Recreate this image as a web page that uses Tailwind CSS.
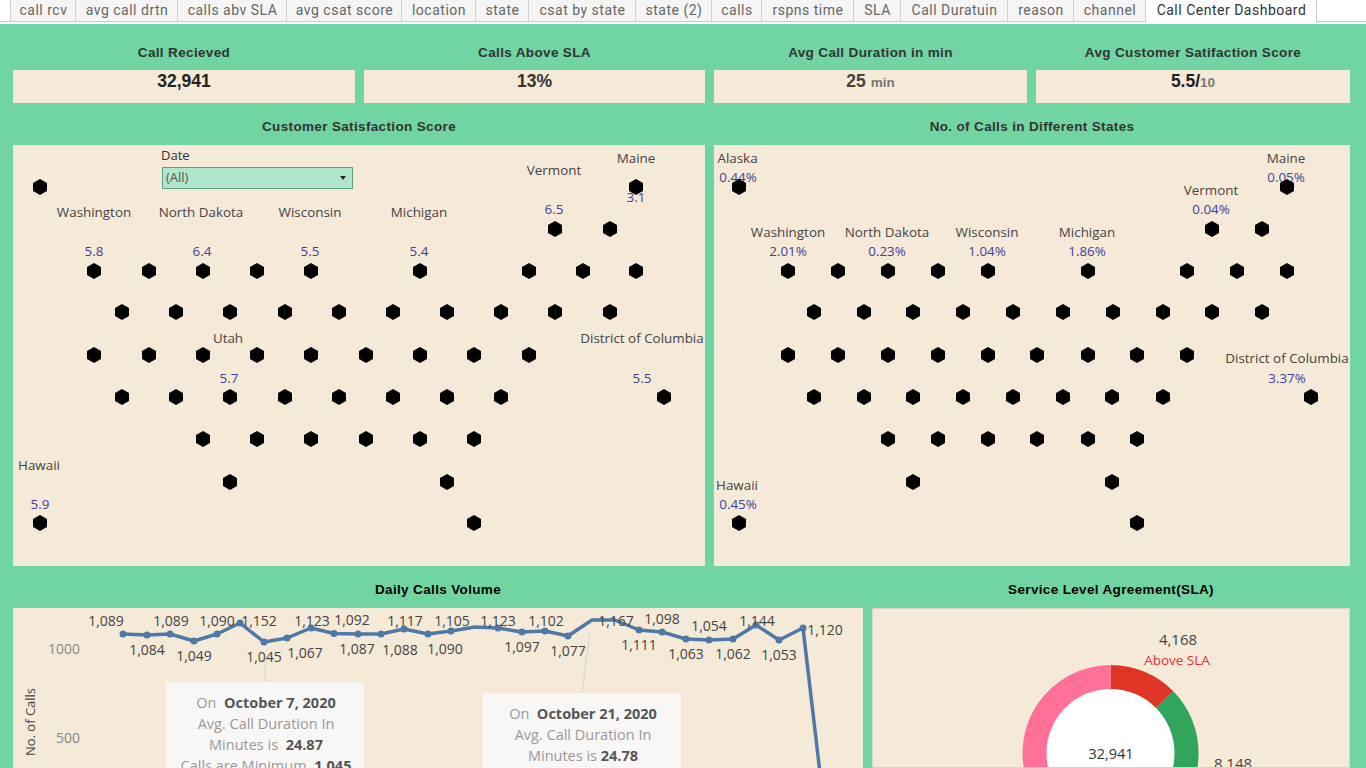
<!DOCTYPE html>
<html>
<head>
<meta charset="utf-8">
<script src="https://cdn.jsdelivr.net/npm/@tailwindcss/browser@4"></script>
</head>
<body class="w-[1366px] h-[768px] overflow-hidden bg-white font-['Open_Sans',sans-serif]">
<nav class="flex h-[22px] pl-[10px] border-b border-[#c8c8c8] text-[14px] leading-[21px] text-[#666] font-['Roboto',sans-serif] tracking-[0.5px]">
  <div class="w-[66px] pl-[1px] text-center bg-[#f5f5f5] border-l border-r border-[#d0d0d0]">call rcv</div>
  <div class="w-[102px] pl-[1px] text-center bg-[#f5f5f5] border-r border-[#d0d0d0]">avg call drtn</div>
  <div class="w-[109px] pl-[1px] text-center bg-[#f5f5f5] border-r border-[#d0d0d0]">calls abv SLA</div>
  <div class="w-[115px] pl-[1px] text-center bg-[#f5f5f5] border-r border-[#d0d0d0]">avg csat score</div>
  <div class="w-[74px] pl-[1px] text-center bg-[#f5f5f5] border-r border-[#d0d0d0]">location</div>
  <div class="w-[53px] pl-[1px] text-center bg-[#f5f5f5] border-r border-[#d0d0d0]">state</div>
  <div class="w-[107px] pl-[1px] text-center bg-[#f5f5f5] border-r border-[#d0d0d0]">csat by state</div>
  <div class="w-[76px] pl-[1px] text-center bg-[#f5f5f5] border-r border-[#d0d0d0]">state (2)</div>
  <div class="w-[50px] pl-[1px] text-center bg-[#f5f5f5] border-r border-[#d0d0d0]">calls</div>
  <div class="w-[92px] pl-[1px] text-center bg-[#f5f5f5] border-r border-[#d0d0d0]">rspns time</div>
  <div class="w-[47px] pl-[1px] text-center bg-[#f5f5f5] border-r border-[#d0d0d0]">SLA</div>
  <div class="w-[107px] pl-[1px] text-center bg-[#f5f5f5] border-r border-[#d0d0d0]">Call Duratuin</div>
  <div class="w-[66px] pl-[1px] text-center bg-[#f5f5f5] border-r border-[#d0d0d0]">reason</div>
  <div class="w-[72px] pl-[1px] text-center bg-[#f5f5f5] border-r border-[#d0d0d0]">channel</div>
  <div class="w-[171px] h-[22px] pl-[1px] text-center bg-white border-r border-[#c8c8c8] text-[#333]">Call Center Dashboard</div>
</nav>
<main class="mt-[2px] h-[744px] overflow-hidden bg-[#70d5a2] pl-[13px] font-['Liberation_Sans',sans-serif]">
  <section class="flex gap-[9px]">
    <div class="w-[342px]">
      <h2 class="pt-[20px] h-[46px] text-center text-[13.5px] leading-[18px] font-bold tracking-[0.35px] text-[#333]">Call Recieved</h2>
      <div class="h-[33px] bg-[#f5e9d8] text-center text-[17.5px] leading-[22px] font-bold text-[#222]">32,941</div>
    </div>
    <div class="w-[341px]">
      <h2 class="pt-[20px] h-[46px] text-center text-[13.5px] leading-[18px] font-bold tracking-[0.35px] text-[#333]">Calls Above SLA</h2>
      <div class="h-[33px] bg-[#f5e9d8] text-center text-[17.5px] leading-[22px] font-bold text-[#333]">13%</div>
    </div>
    <div class="w-[313px]">
      <h2 class="pt-[20px] h-[46px] text-center text-[13.5px] leading-[18px] font-bold tracking-[0.35px] text-[#333]">Avg Call Duration in min</h2>
      <div class="h-[33px] bg-[#f5e9d8] text-center text-[17.5px] leading-[22px] font-bold text-[#444]">25 <span class="text-[13.5px] text-[#777]">min</span></div>
    </div>
    <div class="w-[314px]">
      <h2 class="pt-[20px] h-[46px] text-center text-[13.5px] leading-[18px] font-bold tracking-[0.35px] text-[#333]">Avg Customer Satifaction Score</h2>
      <div class="h-[33px] bg-[#f5e9d8] text-center text-[17.5px] leading-[22px] font-bold text-[#222]">5.5/<span class="text-[13.5px] text-[#777]">10</span></div>
    </div>
  </section>

  <section class="flex gap-[9px]">
    <div class="w-[692px]">
      <h2 class="pt-[15px] h-[42px] text-center text-[13.5px] leading-[18px] font-bold tracking-[0.35px] text-[#333]">Customer Satisfaction Score</h2>
      <div class="relative h-[421px] bg-[#f5e9d8]">
        <svg class="block font-['Open_Sans',sans-serif] text-[13.4px]" width="692" height="421" viewBox="13 145 692 421">
          <defs><polygon id="hex" points="0,-8 7,-4 7,4 0,8 -7,4 -7,-4" fill="#000"/></defs>
          <g text-anchor="middle" class="fill-[#444]">
            <text x="554" y="175">Vermont</text><text x="636" y="163">Maine</text>
            <text x="94" y="217">Washington</text><text x="201" y="217">North Dakota</text>
            <text x="310" y="217">Wisconsin</text><text x="419" y="217">Michigan</text>
            <text x="228" y="343">Utah</text><text x="642" y="343">District of Columbia</text>
            <text x="39" y="470">Hawaii</text>
          </g>
          <g text-anchor="middle" class="fill-[#3f3f9e]">
            <text x="554" y="214">6.5</text><text x="636" y="202">3.1</text>
            <text x="94" y="256">5.8</text><text x="202" y="256">6.4</text>
            <text x="310" y="256">5.5</text><text x="419" y="256">5.4</text>
            <text x="229" y="383">5.7</text><text x="642" y="383">5.5</text>
            <text x="40" y="509">5.9</text>
          </g>
          <use href="#hex" x="40" y="187"/><use href="#hex" x="636" y="187"/>
          <use href="#hex" x="555" y="229"/><use href="#hex" x="610" y="229"/>
          <use href="#hex" x="94" y="271"/><use href="#hex" x="149" y="271"/><use href="#hex" x="203" y="271"/><use href="#hex" x="257" y="271"/><use href="#hex" x="311" y="271"/><use href="#hex" x="420" y="271"/><use href="#hex" x="529" y="271"/><use href="#hex" x="583" y="271"/><use href="#hex" x="636" y="271"/>
          <use href="#hex" x="122" y="312"/><use href="#hex" x="176" y="312"/><use href="#hex" x="230" y="312"/><use href="#hex" x="285" y="312"/><use href="#hex" x="339" y="312"/><use href="#hex" x="393" y="312"/><use href="#hex" x="447" y="312"/><use href="#hex" x="501" y="312"/><use href="#hex" x="555" y="312"/><use href="#hex" x="610" y="312"/>
          <use href="#hex" x="94" y="355"/><use href="#hex" x="149" y="355"/><use href="#hex" x="203" y="355"/><use href="#hex" x="257" y="355"/><use href="#hex" x="311" y="355"/><use href="#hex" x="366" y="355"/><use href="#hex" x="420" y="355"/><use href="#hex" x="474" y="355"/><use href="#hex" x="529" y="355"/>
          <use href="#hex" x="122" y="397"/><use href="#hex" x="176" y="397"/><use href="#hex" x="230" y="397"/><use href="#hex" x="285" y="397"/><use href="#hex" x="339" y="397"/><use href="#hex" x="393" y="397"/><use href="#hex" x="447" y="397"/><use href="#hex" x="501" y="397"/><use href="#hex" x="664" y="397"/>
          <use href="#hex" x="203" y="439"/><use href="#hex" x="257" y="439"/><use href="#hex" x="311" y="439"/><use href="#hex" x="366" y="439"/><use href="#hex" x="420" y="439"/><use href="#hex" x="474" y="439"/>
          <use href="#hex" x="230" y="482"/><use href="#hex" x="447" y="482"/>
          <use href="#hex" x="40" y="523"/><use href="#hex" x="474" y="523"/>
        </svg>
        <div class="absolute left-[148px] top-[2px] font-['Open_Sans',sans-serif] text-[13px] leading-[16px] text-[#333]">Date</div>
        <div class="absolute left-[149px] top-[22px] w-[191px] h-[22px] flex items-center justify-between pl-[3px] pr-[6px] bg-[#b0e6cb] border border-[#5f9f80] font-['Open_Sans',sans-serif] text-[13px] text-[#555]">
          <span>(All)</span>
          <span class="w-0 h-0 border-l-[3px] border-r-[3px] border-t-[4px] border-l-transparent border-r-transparent border-t-[#222]"></span>
        </div>
      </div>
    </div>
    <div class="w-[636px]">
      <h2 class="pt-[15px] h-[42px] text-center text-[13.5px] leading-[18px] font-bold tracking-[0.35px] text-[#333]">No. of Calls in Different States</h2>
      <div class="h-[421px] bg-[#f5e9d8]">
        <svg class="block font-['Open_Sans',sans-serif] text-[13.4px]" width="636" height="421" viewBox="714 145 636 421">
          <g text-anchor="middle" class="fill-[#444]">
            <text x="737.5" y="163">Alaska</text><text x="1286" y="163">Maine</text><text x="1211" y="195">Vermont</text>
            <text x="788" y="237">Washington</text><text x="887" y="237">North Dakota</text><text x="987" y="237">Wisconsin</text><text x="1087" y="237">Michigan</text>
            <text x="1287" y="363">District of Columbia</text><text x="737" y="490">Hawaii</text>
          </g>
          <g text-anchor="middle" class="fill-[#3f3f9e]">
            <text x="738" y="182">0.44%</text><text x="1286" y="182">0.05%</text><text x="1211" y="214">0.04%</text>
            <text x="788" y="256">2.01%</text><text x="887" y="256">0.23%</text><text x="987" y="256">1.04%</text><text x="1087" y="256">1.86%</text>
            <text x="1287" y="383">3.37%</text><text x="738" y="509">0.45%</text>
          </g>
          <use href="#hex" x="739" y="187"/><use href="#hex" x="1287" y="187"/>
          <use href="#hex" x="1212" y="229"/><use href="#hex" x="1262" y="229"/>
          <use href="#hex" x="788" y="271"/><use href="#hex" x="838" y="271"/><use href="#hex" x="888" y="271"/><use href="#hex" x="938" y="271"/><use href="#hex" x="988" y="271"/><use href="#hex" x="1088" y="271"/><use href="#hex" x="1187" y="271"/><use href="#hex" x="1237" y="271"/><use href="#hex" x="1287" y="271"/>
          <use href="#hex" x="814" y="312"/><use href="#hex" x="864" y="312"/><use href="#hex" x="913" y="312"/><use href="#hex" x="963" y="312"/><use href="#hex" x="1013" y="312"/><use href="#hex" x="1063" y="312"/><use href="#hex" x="1113" y="312"/><use href="#hex" x="1163" y="312"/><use href="#hex" x="1212" y="312"/><use href="#hex" x="1262" y="312"/>
          <use href="#hex" x="788" y="355"/><use href="#hex" x="838" y="355"/><use href="#hex" x="888" y="355"/><use href="#hex" x="938" y="355"/><use href="#hex" x="988" y="355"/><use href="#hex" x="1037" y="355"/><use href="#hex" x="1088" y="355"/><use href="#hex" x="1137" y="355"/><use href="#hex" x="1187" y="355"/>
          <use href="#hex" x="814" y="397"/><use href="#hex" x="864" y="397"/><use href="#hex" x="913" y="397"/><use href="#hex" x="963" y="397"/><use href="#hex" x="1013" y="397"/><use href="#hex" x="1063" y="397"/><use href="#hex" x="1112" y="397"/><use href="#hex" x="1163" y="397"/><use href="#hex" x="1311" y="397"/>
          <use href="#hex" x="888" y="439"/><use href="#hex" x="938" y="439"/><use href="#hex" x="988" y="439"/><use href="#hex" x="1037" y="439"/><use href="#hex" x="1088" y="439"/><use href="#hex" x="1137" y="439"/>
          <use href="#hex" x="913" y="482"/><use href="#hex" x="1112" y="482"/>
          <use href="#hex" x="739" y="523"/><use href="#hex" x="1137" y="523"/>
        </svg>
      </div>
    </div>
  </section>

  <section class="flex gap-[9px]">
    <div class="w-[850px]">
      <h2 class="pt-[15px] h-[42px] text-center text-[13.5px] leading-[18px] font-bold tracking-[0.35px] text-black">Daily Calls Volume</h2>
      <div class="relative h-[160px] overflow-hidden bg-[#f5e9d8]">
        <svg class="block font-['Open_Sans',sans-serif] text-[14px]" width="850" height="160" viewBox="13 608 850 160">
          <g class="fill-[#888] text-[14px]" text-anchor="end"><text x="80" y="654">1000</text><text x="80" y="743">500</text></g>
          <path d="M83 650h4M83 738h4" stroke="#fff" stroke-width="1"/>
          <text transform="translate(35 722) rotate(-90)" text-anchor="middle" class="fill-[#444] text-[13px]">No. of Calls</text>
          <path d="M265 660V682M590 632L582 693" stroke="#d6d2cc" stroke-width="1" fill="none"/>
          <polyline fill="none" stroke="#4e79a7" stroke-width="3.5" stroke-linejoin="round" points="123,634 147,635 170,634 194,641 217,634 240,623 264,642 287,638 311,628 334,633.5 358,634 381,634 404,629 428,634 451,631 475,627 498,628 522,632 545,631 568,636 592,620 615,620 639,630 662,632 686,639 709,640 733,639 756,625 779,640 803,628 822,790"/>
          <g fill="#4e79a7">
            <circle cx="123" cy="634" r="3.5"/><circle cx="147" cy="635" r="3.5"/><circle cx="170" cy="634" r="3.5"/><circle cx="194" cy="641" r="3.5"/><circle cx="217" cy="634" r="3.5"/><circle cx="240" cy="623" r="3.5"/><circle cx="264" cy="642" r="3.5"/><circle cx="287" cy="638" r="3.5"/><circle cx="311" cy="628" r="3.5"/><circle cx="334" cy="633.5" r="3.5"/><circle cx="358" cy="634" r="3.5"/><circle cx="381" cy="634" r="3.5"/><circle cx="404" cy="629" r="3.5"/><circle cx="428" cy="634" r="3.5"/><circle cx="451" cy="631" r="3.5"/><circle cx="498" cy="628" r="3.5"/><circle cx="522" cy="632" r="3.5"/><circle cx="545" cy="631" r="3.5"/><circle cx="568" cy="636" r="3.5"/><circle cx="639" cy="630" r="3.5"/><circle cx="662" cy="632" r="3.5"/><circle cx="686" cy="639" r="3.5"/><circle cx="709" cy="640" r="3.5"/><circle cx="733" cy="639" r="3.5"/><circle cx="756" cy="625" r="3.5"/><circle cx="779" cy="640" r="3.5"/><circle cx="803" cy="628" r="3.5"/>
          </g>
          <g text-anchor="middle" class="fill-[#444]">
            <text x="106" y="626">1,089</text><text x="147" y="655">1,084</text><text x="171" y="626">1,089</text><text x="194" y="661">1,049</text><text x="217" y="626">1,090</text><text x="259" y="626">1,152</text><text x="264" y="662">1,045</text><text x="305" y="658">1,067</text><text x="312" y="626">1,123</text><text x="352" y="625">1,092</text><text x="357" y="654">1,087</text><text x="405" y="626">1,117</text><text x="400" y="655">1,088</text><text x="452" y="626">1,105</text><text x="445" y="654">1,090</text><text x="498" y="626">1,123</text><text x="522" y="652">1,097</text><text x="546" y="626">1,102</text><text x="568" y="656">1,077</text><text x="616" y="626">1,167</text><text x="639" y="650">1,111</text><text x="662" y="624">1,098</text><text x="686" y="659">1,063</text><text x="709" y="631">1,054</text><text x="733" y="659">1,062</text><text x="757" y="626">1,144</text><text x="779" y="660">1,053</text><text x="825" y="635">1,120</text>
          </g>
        </svg>
        <div class="absolute left-[153px] top-[74px] w-[198px] h-[100px] pt-[10px] pl-[2px] bg-[#f9f7f5] text-center font-['Open_Sans',sans-serif] text-[14.5px] leading-[21px] text-[#999] whitespace-nowrap">
          <p>On&nbsp; <b class="text-[#555]">October 7, 2020</b></p>
          <p>Avg. Call Duration In</p>
          <p>Minutes is&nbsp; <b class="text-[#555]">24.87</b></p>
          <p>Calls are Minimum&nbsp; <b class="text-[#555]">1,045</b></p>
        </div>
        <div class="absolute left-[470px] top-[85px] w-[198px] h-[90px] pt-[10px] pl-[2px] bg-[#f9f7f5] text-center font-['Open_Sans',sans-serif] text-[14.5px] leading-[21px] text-[#999] whitespace-nowrap">
          <p>On&nbsp; <b class="text-[#555]">October 21, 2020</b></p>
          <p>Avg. Call Duration In</p>
          <p>Minutes is <b class="text-[#555]">24.78</b></p>
        </div>
      </div>
    </div>
    <div class="w-[478px]">
      <h2 class="pt-[15px] h-[42px] text-center text-[13.5px] leading-[18px] font-bold tracking-[0.35px] text-black">Service Level Agreement(SLA)</h2>
      <div class="h-[160px] overflow-hidden bg-[#f5e9d8] border border-[#d9d3ca]">
        <svg class="block font-['Open_Sans',sans-serif] text-[15px]" width="476" height="160" viewBox="873 609 476 160">
          <path d="M1110.5 665A88 88 0 0 1 1173.3 691.3L1110.5 753Z" fill="#e03426"/>
          <path d="M1173.3 691.3A88 88 0 0 1 1173.2 814.8L1110.5 753Z" fill="#32a55d"/>
          <path d="M1173.2 814.8A88 88 0 1 1 1110.5 665L1110.5 753Z" fill="#ff7099"/>
          <circle cx="1110.5" cy="753" r="64" fill="#fff"/>
          <g text-anchor="middle">
            <text x="1178" y="645" class="fill-[#444]">4,168</text>
            <text x="1177" y="665" class="fill-[#f03030] text-[13.5px]">Above SLA</text>
            <text x="1111" y="759" class="fill-[#333] text-[14.5px]">32,941</text>
            <text x="1233" y="769" class="fill-[#444]">8,148</text>
          </g>
        </svg>
      </div>
    </div>
  </section>
</main>
</body>
</html>
